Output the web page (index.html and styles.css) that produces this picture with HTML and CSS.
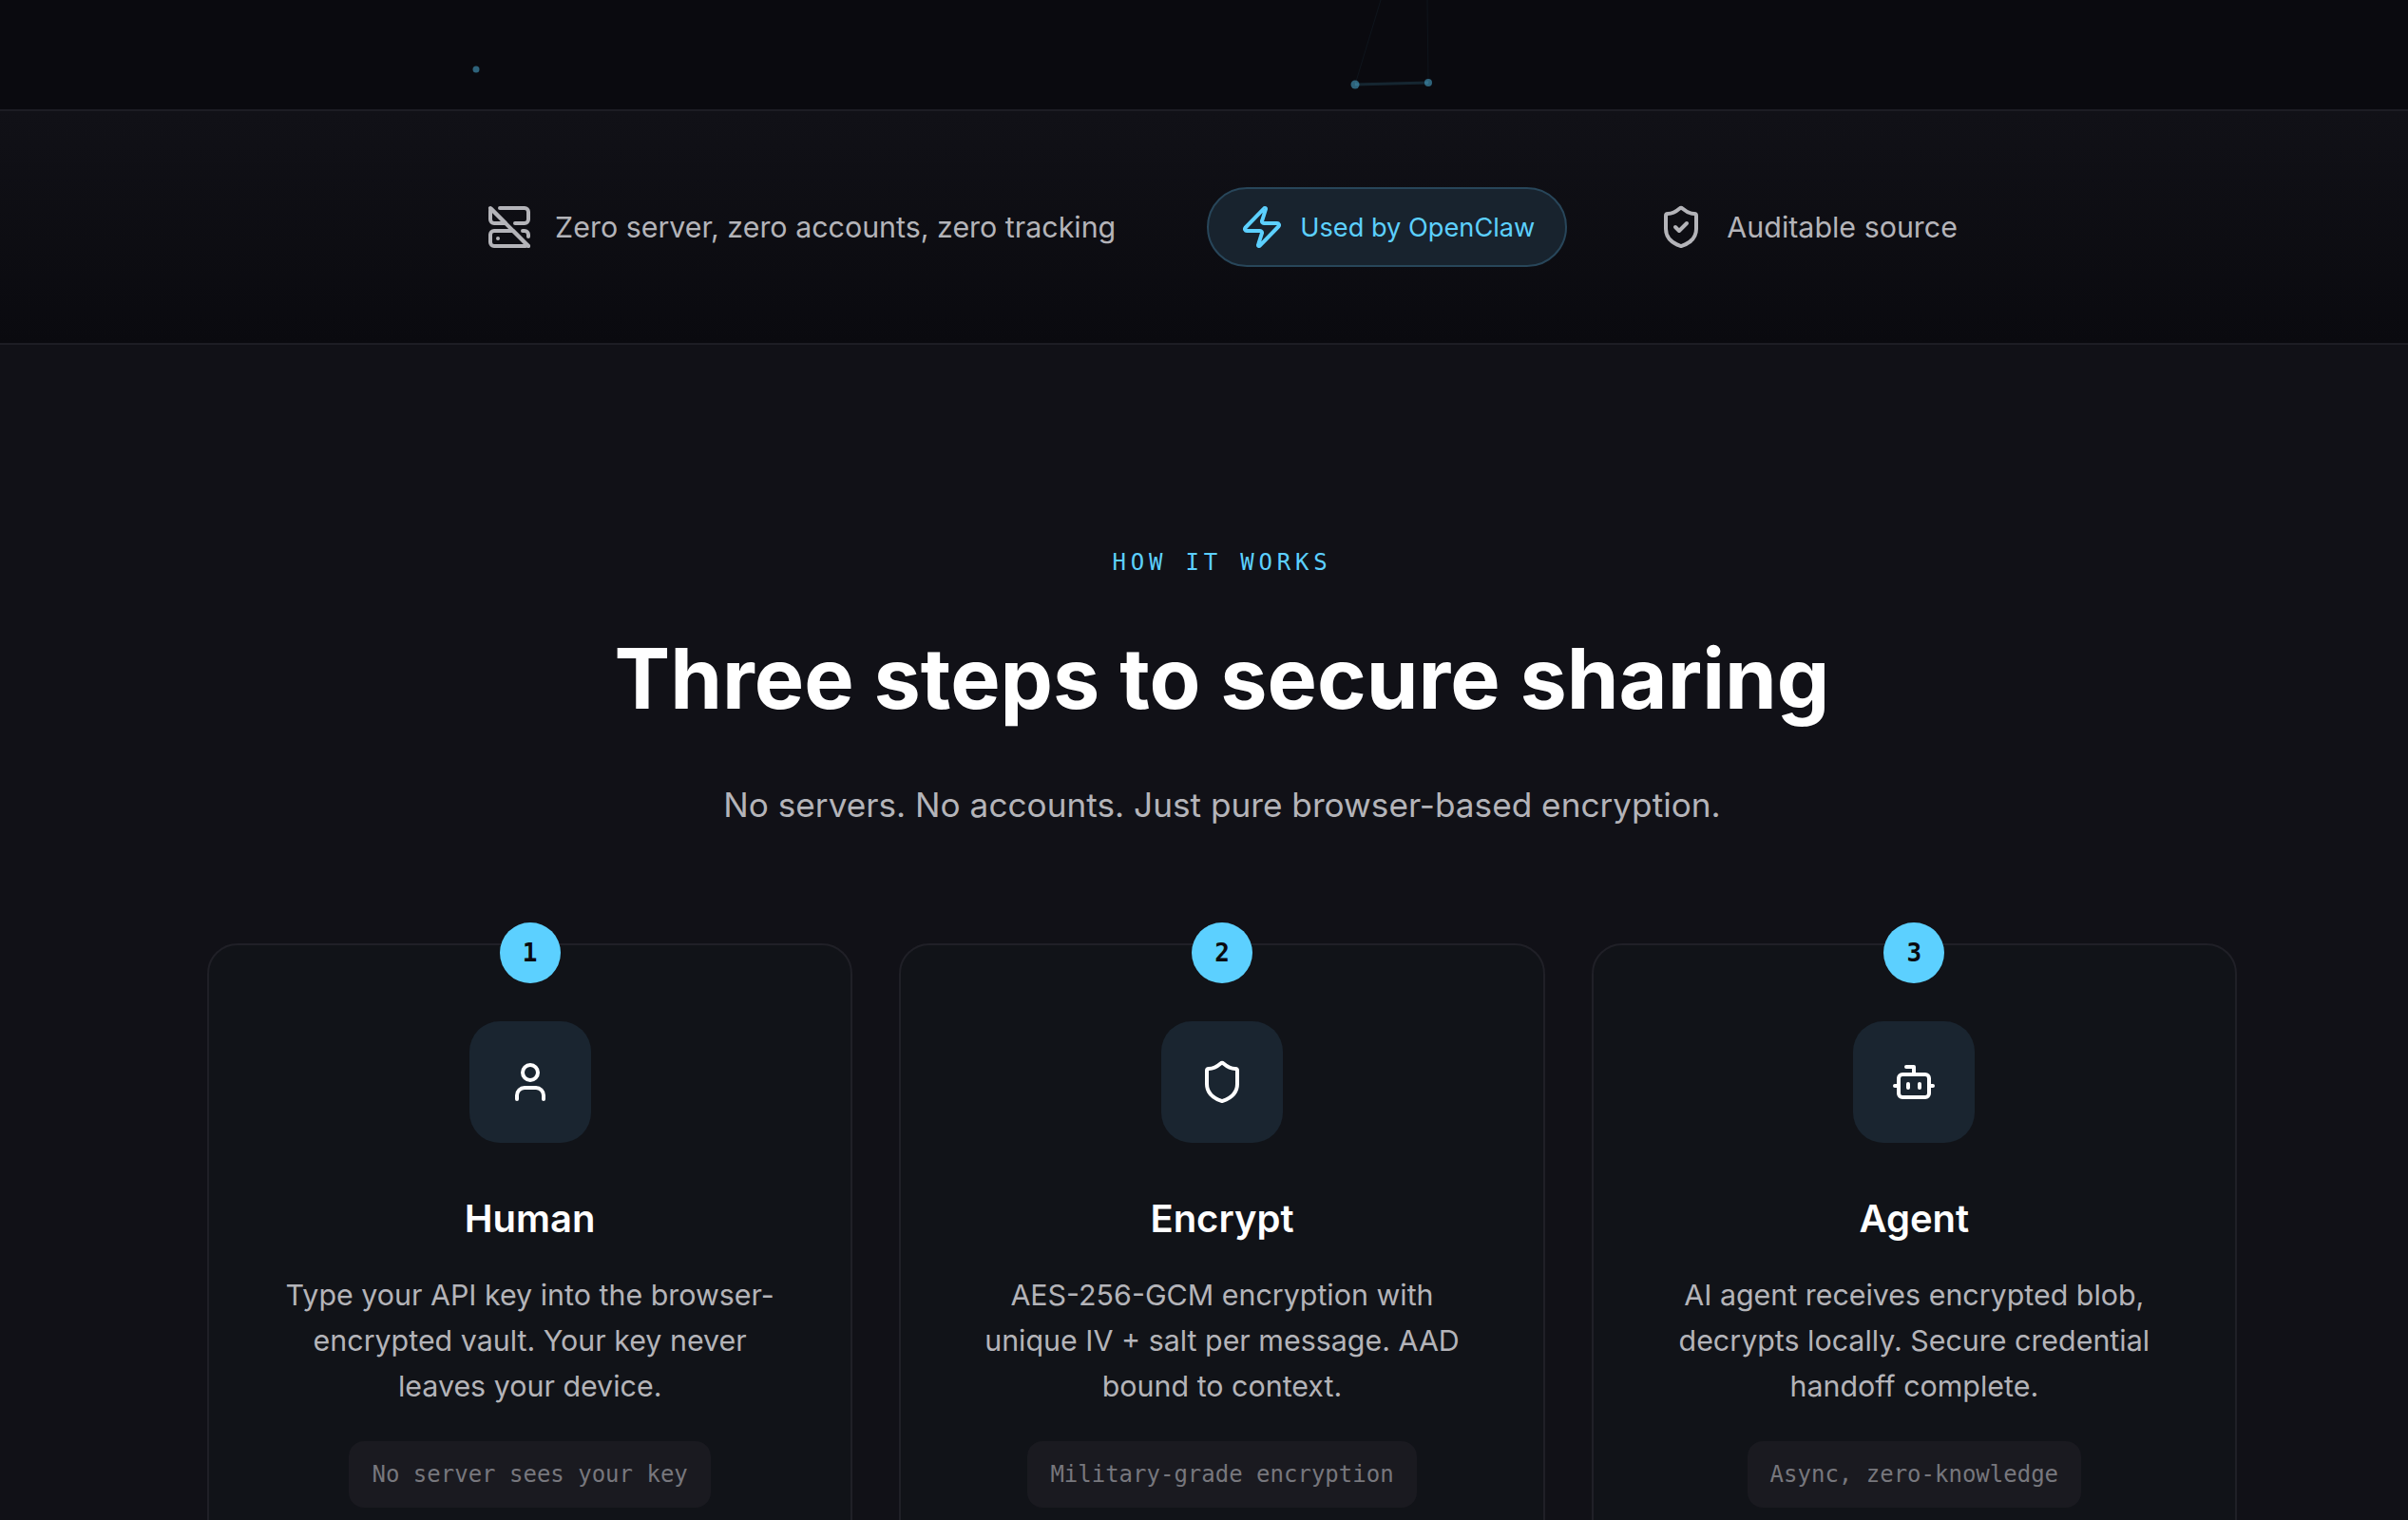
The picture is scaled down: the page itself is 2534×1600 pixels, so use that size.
FILE: index.html
```html
<!DOCTYPE html>
<html lang="en">
<head>
<meta charset="utf-8">
<title>Three steps to secure sharing</title>
<link rel="stylesheet" href="styles.css">
</head>
<body>
<div class="page">
  <div class="hero-end">
    <svg class="network" width="2572" height="115" viewBox="0 0 2572 115">
      <g class="links">
        <line x1="1426" y1="89" x2="1503" y2="87" class="link-strong"/>
        <line x1="1426" y1="89" x2="1453" y2="0"/>
        <line x1="1503" y1="87" x2="1502" y2="0"/>
      </g>
      <circle cx="501" cy="73" r="3.5" class="node"/>
      <circle cx="1426" cy="89" r="4.5" class="node"/>
      <circle cx="1503" cy="87" r="4" class="node"/>
    </svg>
  </div>

  <div class="trust">
    <div class="trust-item">
      <svg class="icon" viewBox="0 0 24 24"><path d="M7 2h13a2 2 0 0 1 2 2v4a2 2 0 0 1-2 2h-5"/><path d="M10 10 2.5 2.5C2 2 2 2.5 2 5v3a2 2 0 0 0 2 2h6z"/><path d="M22 17v-1a2 2 0 0 0-2-2h-1"/><path d="M4 14a2 2 0 0 0-2 2v4a2 2 0 0 0 2 2h16.5l1-.5.5.5-8-8H4z"/><path d="M6 18h.01"/><path d="m2 2 20 20"/></svg>
      <span>Zero server, zero accounts, zero tracking</span>
    </div>
    <div class="trust-pill">
      <svg class="icon" viewBox="0 0 24 24"><path d="M4 14a1 1 0 0 1-.78-1.63l9.9-10.2a.5.5 0 0 1 .86.46l-1.92 6.02A1 1 0 0 0 13 10h7a1 1 0 0 1 .78 1.63l-9.9 10.2a.5.5 0 0 1-.86-.46l1.92-6.02A1 1 0 0 0 11 14z"/></svg>
      <span>Used by OpenClaw</span>
    </div>
    <div class="trust-item">
      <svg class="icon" viewBox="0 0 24 24"><path d="M20 13c0 5-3.5 7.5-7.66 8.95a1 1 0 0 1-.67-.01C7.5 20.5 4 18 4 13V6a1 1 0 0 1 1-1c2 0 4.5-1.2 6.24-2.72a1.17 1.17 0 0 1 1.52 0C14.51 3.81 17 5 19 5a1 1 0 0 1 1 1z"/><path d="m9 12 2 2 4-4"/></svg>
      <span>Auditable source</span>
    </div>
  </div>

  <section class="how">
    <p class="eyebrow">HOW IT WORKS</p>
    <h2 class="title">Three steps to secure sharing</h2>
    <p class="subtitle">No servers. No accounts. Just pure browser-based encryption.</p>
    <div class="steps">
      <article class="step">
        <div class="badge">1</div>
        <div class="step-icon">
          <svg class="icon" viewBox="0 0 24 24"><path d="M19 21v-2a4 4 0 0 0-4-4H9a4 4 0 0 0-4 4v2"/><circle cx="12" cy="7" r="4"/></svg>
        </div>
        <h3 class="step-title">Human</h3>
        <p class="step-text">Type your API key into the browser-encrypted vault. Your key never leaves your device.</p>
        <span class="chip">No server sees your key</span>
      </article>
      <article class="step">
        <div class="badge">2</div>
        <div class="step-icon">
          <svg class="icon" viewBox="0 0 24 24"><path d="M20 13c0 5-3.5 7.5-7.66 8.95a1 1 0 0 1-.67-.01C7.5 20.5 4 18 4 13V6a1 1 0 0 1 1-1c2 0 4.5-1.2 6.24-2.72a1.17 1.17 0 0 1 1.52 0C14.51 3.81 17 5 19 5a1 1 0 0 1 1 1z"/></svg>
        </div>
        <h3 class="step-title">Encrypt</h3>
        <p class="step-text">AES-256-GCM encryption with unique IV + salt per message. AAD bound to context.</p>
        <span class="chip">Military-grade encryption</span>
      </article>
      <article class="step">
        <div class="badge">3</div>
        <div class="step-icon">
          <svg class="icon" viewBox="0 0 24 24"><path d="M12 8V4H8"/><rect x="4" y="8" width="16" height="12" rx="2"/><path d="M2 14h2"/><path d="M20 14h2"/><path d="M15 13v2"/><path d="M9 13v2"/></svg>
        </div>
        <h3 class="step-title">Agent</h3>
        <p class="step-text">AI agent receives encrypted blob, decrypts locally. Secure credential handoff complete.</p>
        <span class="chip">Async, zero-knowledge</span>
      </article>
    </div>
  </section>
</div>
</body>
</html>
```
FILE: styles.css
```css
* { box-sizing: border-box; }
html, body { margin: 0; padding: 0; height: 1600px; overflow: hidden; background: #111117; }
body { font-family: Inter, "Noto Sans", sans-serif; color: #fff; }
.page { width: 2572px; }

.icon { width: 48px; height: 48px; flex: none; fill: none; stroke: currentColor; stroke-width: 2; stroke-linecap: round; stroke-linejoin: round; }

.hero-end { position: relative; height: 117px; background: #0a0a0f; border-bottom: 2px solid #1d1d24; overflow: hidden; }
.network { position: absolute; left: 0; top: 0; }
.links line { stroke: #5cd0ff; stroke-width: 1; opacity: .05; }
.links .link-strong { stroke-width: 3; opacity: .14; }
.node { fill: #5cd0ff; opacity: .45; }

.trust { height: 246px; display: flex; justify-content: center; align-items: center; gap: 96px; background: linear-gradient(180deg, #111117 0%, #0a0a0f 100%); border-bottom: 2px solid #1d1d24; }
.trust-item { display: flex; align-items: center; gap: 24px; font-size: 30.4px; color: #b4b4b9; }
.trust-pill { display: flex; align-items: center; gap: 16px; padding: 16px 32px; border: 2px solid #28465a; border-radius: 999px; background: #18232e; color: #5cd0ff; font-size: 27.2px; font-weight: 400; }

.how { padding-top: 210px; text-align: center; }
.eyebrow { margin: 0; font-family: "DejaVu Sans Mono", "Liberation Mono", monospace; font-size: 24px; line-height: 38px; letter-spacing: 4.8px; color: #5cd0ff; }
.title { margin: 50px 0 0; font-size: 88px; line-height: 106px; font-weight: 700; color: #fff; }
.subtitle { margin: 52px 0 0; font-size: 35.2px; line-height: 56px; color: #b4b4b9; }
.steps { width: 2136px; margin: 118px auto 0; display: grid; grid-template-columns: repeat(3, 1fr); gap: 49px; }
.step { position: relative; height: 800px; padding: 80px 64px 0; display: flex; flex-direction: column; align-items: center; border: 2px solid #202027; border-radius: 32px; background: #111318; }
.badge { position: absolute; top: -24px; left: 50%; width: 64px; height: 64px; margin-left: -32px; display: flex; align-items: center; justify-content: center; border-radius: 50%; background: #5cd0ff; color: #0a0a0f; font-family: "DejaVu Sans Mono", monospace; font-size: 26px; font-weight: 700; }
.step-icon { width: 128px; height: 128px; display: flex; align-items: center; justify-content: center; border-radius: 32px; background: #1a2530; color: #fff; }
.step-title { margin: 50px 0 0; font-size: 40px; line-height: 60px; font-weight: 600; color: #fff; }
.step-text { margin: 26px 0 0; font-size: 30.4px; line-height: 48px; color: #b4b4b9; }
.chip { margin-top: 34px; padding: 16px 24px; border-radius: 16px; background: #1a1a20; font-family: "DejaVu Sans Mono", "Liberation Mono", monospace; font-size: 24px; line-height: 38px; color: #77777d; }
```
